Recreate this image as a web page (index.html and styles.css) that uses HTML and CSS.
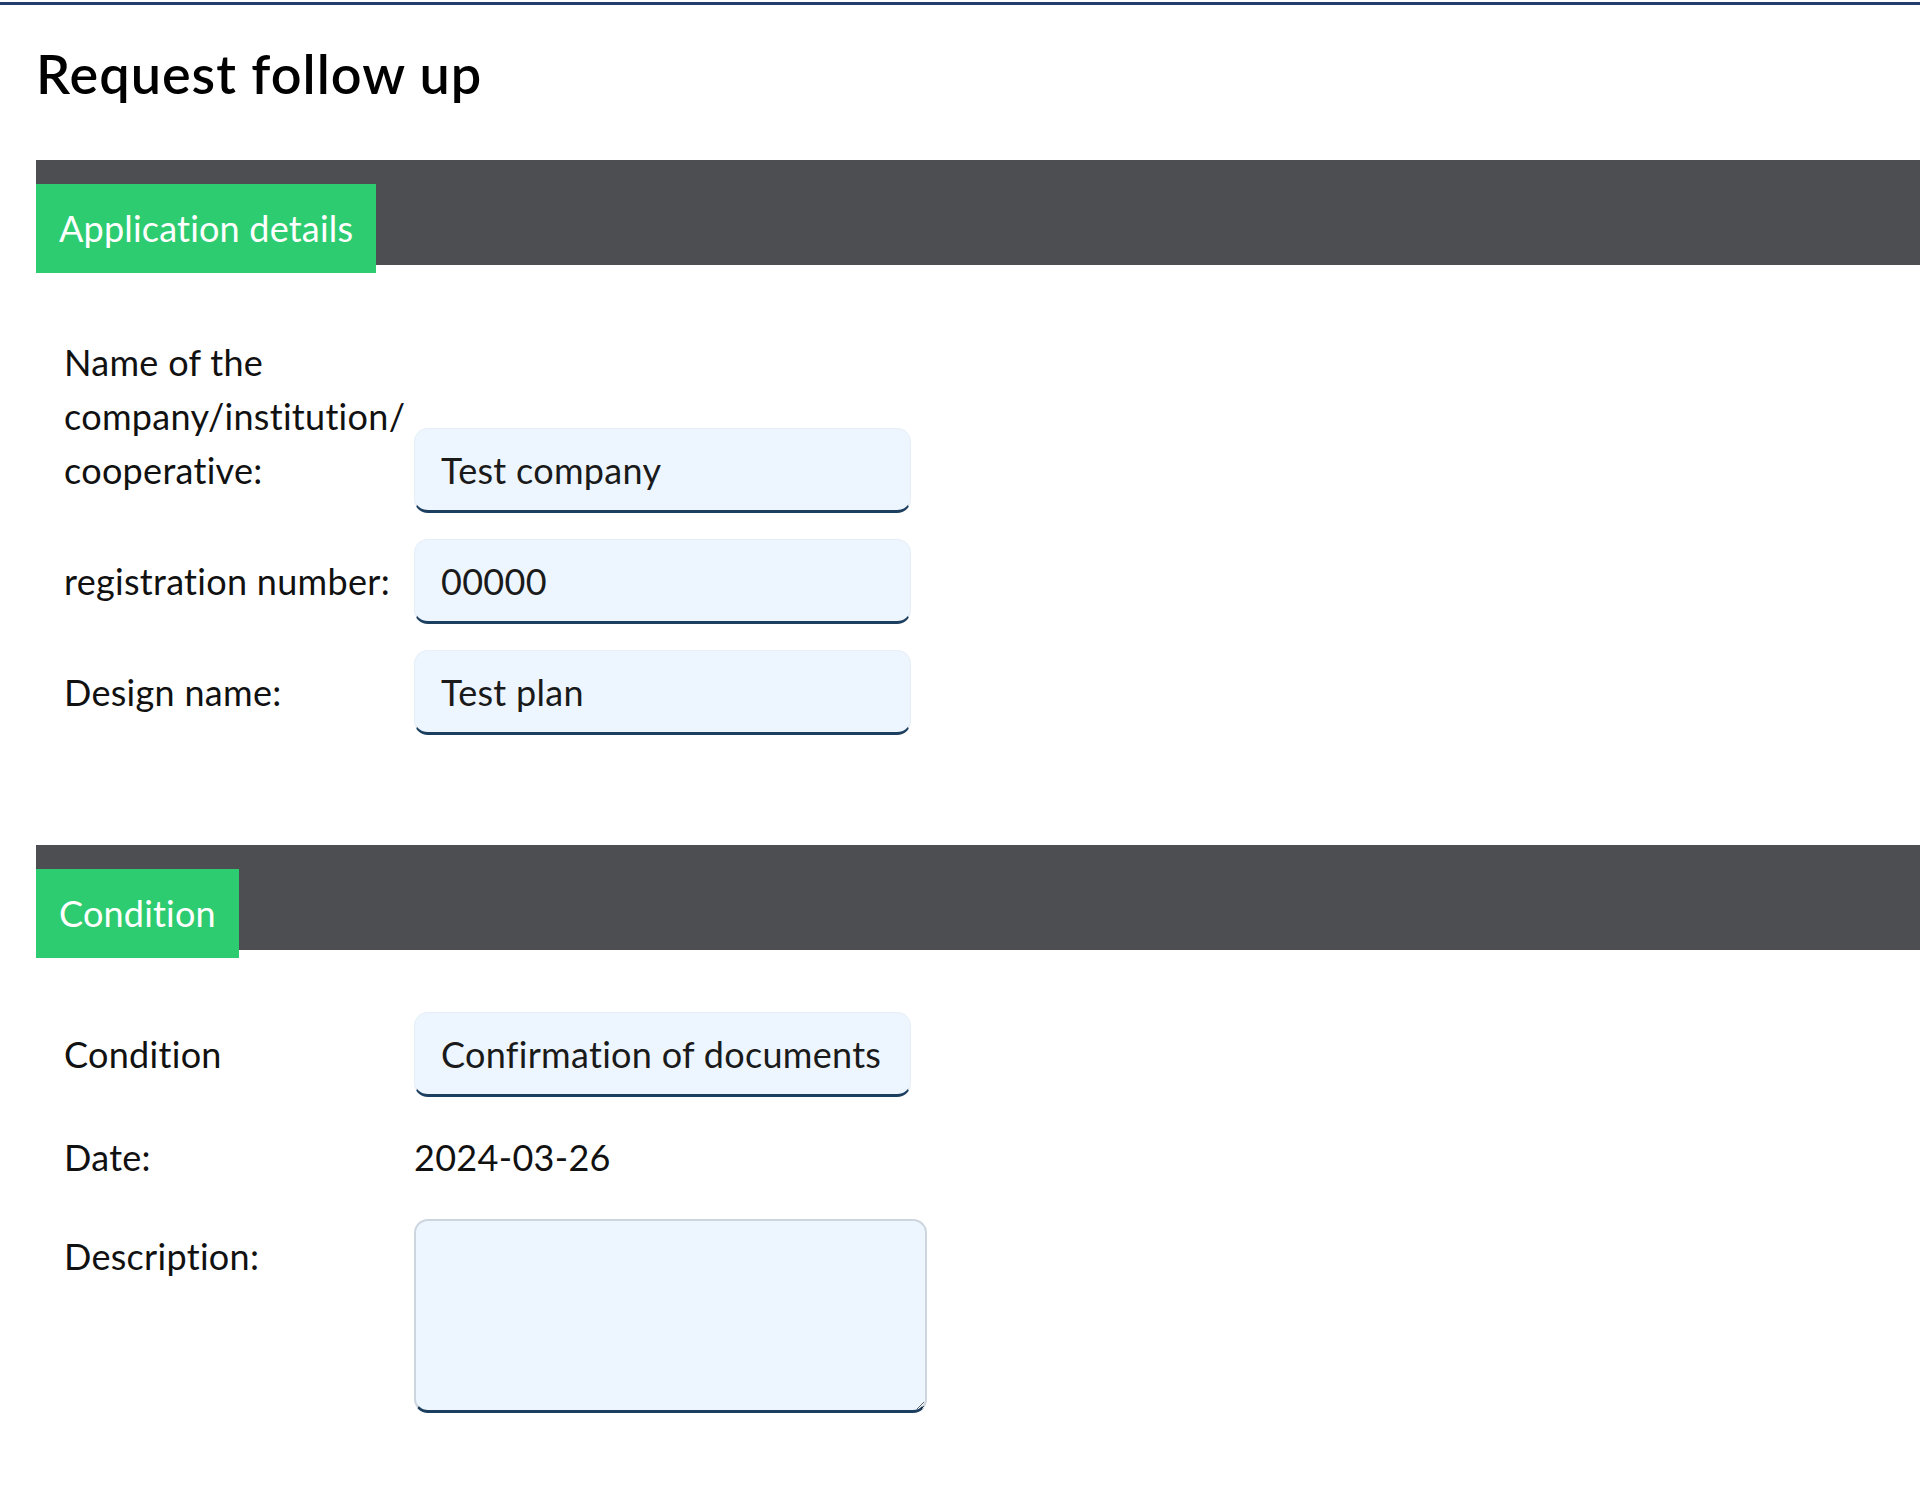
FILE: index.html
```html
<!DOCTYPE html>
<html lang="en">
<head>
    <meta charset="UTF-8">
    <meta name="viewport" content="width=device-width, initial-scale=1.0">
    <title>Request follow up</title>
    <link rel="stylesheet" href="styles.css">
</head>
<body>

    <div class="top-line"></div>

    <div class="page">
        <h1>Request follow up</h1>

        <div class="section">
            <div class="section-head">
                <div class="tab">Application details</div>
            </div>
            <div class="fields first">
                <div class="row">
                    <label for="company">Name of the company/institution/ cooperative:</label>
                    <input type="text" id="company" value="Test company">
                </div>
                <div class="row">
                    <label for="regNumber">registration number:</label>
                    <input type="text" id="regNumber" value="00000">
                </div>
                <div class="row">
                    <label for="designName">Design name:</label>
                    <input type="text" id="designName" value="Test plan">
                </div>
            </div>
        </div>

        <div class="section">
            <div class="section-head">
                <div class="tab">Condition</div>
            </div>
            <div class="fields">
                <div class="row">
                    <label for="condition">Condition</label>
                    <input type="text" id="condition" value="Confirmation of documents">
                </div>
                <div class="row date-row">
                    <label>Date:</label>
                    <span class="value">2024-03-26</span>
                </div>
                <div class="row top-row">
                    <label for="description">Description:</label>
                    <textarea id="description"></textarea>
                </div>
            </div>
        </div>
    </div>

</body>
</html>
```

FILE: styles.css
```css
* {
    box-sizing: border-box;
    margin: 0;
    padding: 0;
    font-family: Lato, "Open Sans", sans-serif;
}

body {
    background: white;
    color: #111;
}

.top-line {
    margin-top: 2px;
    height: 3px;
    background: #253c6e;
}

.page {
    padding-left: 36px;
}

h1 {
    font-size: 54px;
    font-weight: 600;
    letter-spacing: 1px;
    line-height: 1.2;
    margin: 37px 0 53px 0;
    color: #000;
}

.section-head {
    display: flex;
    align-items: flex-start;
    height: 105px;
    padding-top: 24px;
    background: #4d4e52;
}

.tab {
    height: 89px;
    line-height: 89px;
    padding: 0 23px;
    background: #2ecc71;
    color: white;
    font-size: 36px;
    letter-spacing: 0.2px;
}

.fields {
    padding: 62px 0 0 28px;
}

.fields.first {
    padding-top: 70px;
}

.section + .section {
    margin-top: 110px;
}

.row {
    display: flex;
    align-items: last baseline;
    margin-bottom: 26px;
    font-size: 36px;
    line-height: 54px;
    letter-spacing: 0.3px;
}

.row label {
    width: 350px;
    flex-shrink: 0;
    padding-right: 20px;
}

input, textarea {
    width: 497px;
    height: 85px;
    padding: 0 26px;
    font-size: 36px;
    letter-spacing: 0.3px;
    color: #1a1a1a;
    background: #edf6fe;
    border: 1px solid #e6eef7;
    border-bottom: 3px solid #1c3f5f;
    border-radius: 14px;
    outline: none;
}

.date-row {
    padding: 7px 0 9px;
}

.top-row {
    align-items: flex-start;
}

.top-row label {
    margin-top: 10px;
}

textarea {
    width: 513px;
    height: 194px;
    padding: 10px 20px;
    border: 2px solid #cdd5de;
    border-bottom: 3px solid #1c3f5f;
    resize: both;
}
```
